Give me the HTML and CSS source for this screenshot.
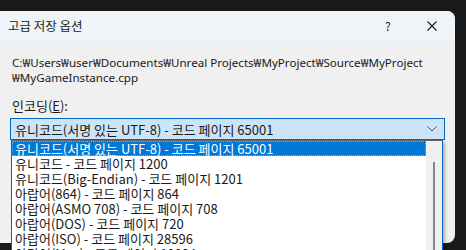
FILE: index.html
```html
<!DOCTYPE html>
<html>
	<head>
		<meta charset="UTF-8">
		<title>고급 저장 옵션</title>
		<link rel="stylesheet" href="styles.css">
	</head>
	<body>
		<div class="dialog">
			<div class="titlebar">
				<span class="title">고급 저장 옵션</span>
				<span class="help">?</span>
				<svg class="close" width="10" height="10" viewBox="0 0 10 10">
					<path d="M0.5 0.5L9.5 9.5M9.5 0.5L0.5 9.5" stroke="#1a1a1a" stroke-width="1.1" fill="none"/>
				</svg>
			</div>
			<div class="content">
				<p class="path">C:₩Users₩user₩Documents₩Unreal Projects₩MyProject₩Source₩MyProject<br>₩MyGameInstance.cpp</p>
				<div class="label">인코딩(<u>E</u>):</div>
				<div class="combo">
					<span class="combo-text">유니코드(서명 있는 UTF-8) - 코드 페이지 65001</span>
					<svg class="chevron" width="10" height="6" viewBox="0 0 10 6">
						<path d="M0.5 0.5L5 5L9.5 0.5" stroke="#555" stroke-width="1" fill="none"/>
					</svg>
					<div class="dropdown">
						<ul class="items">
							<li class="active"><span>유니코드(서명 있는 UTF-8) - 코드 페이지 65001</span></li>
							<li>유니코드 - 코드 페이지 1200</li>
							<li>유니코드(Big-Endian) - 코드 페이지 1201</li>
							<li>아랍어(864) - 코드 페이지 864</li>
							<li>아랍어(ASMO 708) - 코드 페이지 708</li>
							<li>아랍어(DOS) - 코드 페이지 720</li>
							<li>아랍어(ISO) - 코드 페이지 28596</li>
							<li>아랍어(Mac) - 코드 페이지 10004</li>
						</ul>
						<div class="scroll"><div class="thumb"></div></div>
					</div>
				</div>
			</div>
		</div>
	</body>
</html>
```

FILE: styles.css
```css
html, body {
	margin: 0;
	padding: 0;
	height: 100%;
	overflow: hidden;
}
body {
	background: #191919;
	font-family: "Noto Sans CJK KR", sans-serif;
	font-size: 13px;
	color: #1a1a1a;
}
.dialog {
	margin-top: 11px;
	width: 455px;
	height: 232px;
	background: #f0f0f0;
	border-radius: 0 8px 8px 0;
	position: relative;
}
.titlebar {
	height: 29px;
	background: #eff4f9;
	border-radius: 0 8px 0 0;
	display: flex;
	align-items: center;
	padding-left: 8px;
}
.title {
	font-size: 12.5px;
	flex: 1;
}
.help {
	font-size: 12px;
	width: 42px;
	text-align: left;
}
.close {
	margin-right: 18px;
}
.content {
	padding: 15px 0 0 12px;
}
.path {
	margin: 0;
	font-family: "Noto Sans", "Noto Sans CJK KR", sans-serif;
	font-size: 11.6px;
	line-height: 15px;
	white-space: nowrap;
}
.label {
	margin-top: 13px;
	line-height: 15px;
}
.combo {
	position: relative;
	margin: 5px 0 0 -2px;
	width: 429px;
	height: 20px;
	border: 1px solid #0067c0;
	background: #cce4f7;
	display: flex;
	align-items: center;
	padding-left: 4px;
	box-sizing: content-box;
}
.combo-text {
	flex: 1;
}
.chevron {
	margin-right: 7px;
}
.dropdown {
	position: absolute;
	left: 0;
	top: 21px;
	width: 430px;
	height: 130px;
	background: #fff;
	border: 1px solid #0067c0;
	border-top-color: #646464;
	display: flex;
	box-shadow: 2px 2px 3px rgba(0,0,0,0.25);
}
.items {
	list-style: none;
	margin: 0;
	padding: 0;
	flex: 1;
}
.items li {
	height: 15px;
	line-height: 15px;
	padding-left: 3px;
	white-space: nowrap;
}
.items li.active {
	background: #0078d7;
	color: #fff;
	outline: 1px dotted #f39b2b;
	outline-offset: -1px;
}
.scroll {
	width: 16px;
	background: #f0f0f0;
	display: flex;
	justify-content: center;
	padding-top: 21px;
}
.thumb {
	width: 2px;
	height: 100%;
	background: #858585;
}
```
